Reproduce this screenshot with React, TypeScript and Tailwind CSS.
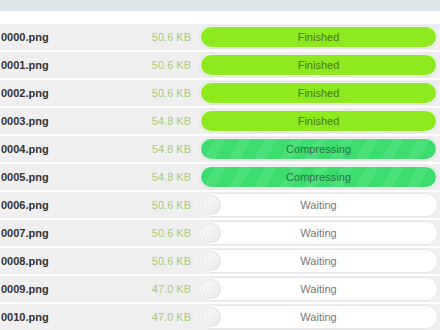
import React from "react";

type Status = "Finished" | "Compressing" | "Waiting";

interface FileRow {
    name: string;
    size: string;
    status: Status;
}

const files: FileRow[] = [
    { name: "0000.png", size: "50.6 KB", status: "Finished" },
    { name: "0001.png", size: "50.6 KB", status: "Finished" },
    { name: "0002.png", size: "50.6 KB", status: "Finished" },
    { name: "0003.png", size: "54.8 KB", status: "Finished" },
    { name: "0004.png", size: "54.8 KB", status: "Compressing" },
    { name: "0005.png", size: "54.8 KB", status: "Compressing" },
    { name: "0006.png", size: "50.6 KB", status: "Waiting" },
    { name: "0007.png", size: "50.6 KB", status: "Waiting" },
    { name: "0008.png", size: "50.6 KB", status: "Waiting" },
    { name: "0009.png", size: "47.0 KB", status: "Waiting" },
    { name: "0010.png", size: "47.0 KB", status: "Waiting" },
];

function StatusBar({ status }: { status: Status }) {
    if (status === "Finished") {
        return (
            <div className="relative h-[24px] w-full rounded-full bg-[#f4f4f4] p-[2px] shadow-[inset_0_0_0_1px_#e4e4e4]">
                <div className="flex h-full w-full items-center justify-center rounded-full bg-[#8fe91f] text-[11px] text-[#4a7420]">
                    Finished
                </div>
            </div>
        );
    }
    if (status === "Compressing") {
        return (
            <div className="relative h-[24px] w-full rounded-full bg-[#f4f4f4] p-[2px] shadow-[inset_0_0_0_1px_#e4e4e4]">
                <div className="flex h-full w-full items-center justify-center rounded-full bg-[repeating-linear-gradient(120deg,#3ddc6e_0px,#3ddc6e_12px,#4be079_12px,#4be079_22px)] text-[11px] text-[#2c7046]">
                    Compressing
                </div>
            </div>
        );
    }
    return (
        <div className="relative flex h-[24px] w-full items-center rounded-full bg-white p-[2px] shadow-[inset_0_0_0_1px_#e6e6e6]">
            <div className="h-[20px] w-[20px] shrink-0 rounded-full bg-[linear-gradient(135deg,#fbfbfb,#e6e6e6)] shadow-[inset_0_0_0_1px_#e2e2e2]" />
            <div className="flex-1 pr-[20px] text-center text-[11px] text-[#777]">Waiting</div>
        </div>
    );
}

export default function App() {
    return (
        <div className="h-[330px] w-[440px] overflow-hidden bg-white font-['Liberation_Sans',Arial,sans-serif]">
            <div className="h-[11px] bg-[#dce6eb]" />
            <div className="h-[13px] bg-white" />
            {files.map((f) => (
                <div
                    key={f.name}
                    className="flex h-[28px] items-center border-b-2 border-white bg-[#efefef]"
                >
                    <div className="flex-1 pl-[1px] text-[11px] font-bold text-[#333]">{f.name}</div>
                    <div className="w-[80px] pr-[8px] text-right text-[11px] text-[#a7c97c]">{f.size}</div>
                    <div className="w-[241px] pr-[2px]">
                        <StatusBar status={f.status} />
                    </div>
                </div>
            ))}
        </div>
    );
}
